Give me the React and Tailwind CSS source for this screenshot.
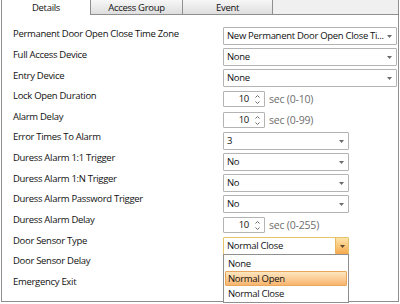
import React from 'react'

const FONT = { fontFamily: '"Open Sans", "Noto Sans", sans-serif' }

const rows = [
  { label: 'Permanent Door Open Close Time Zone', type: 'combo', value: 'New Permanent Door Open Close Ti...', wide: true },
  { label: 'Full Access Device', type: 'combo', value: 'None', wide: true },
  { label: 'Entry Device', type: 'combo', value: 'None', wide: true },
  { label: 'Lock Open Duration', type: 'spin', value: '10', hint: 'sec (0-10)' },
  { label: 'Alarm Delay', type: 'spin', value: '10', hint: 'sec (0-99)' },
  { label: 'Error Times To Alarm', type: 'combo', value: '3' },
  { label: 'Duress Alarm 1:1 Trigger', type: 'combo', value: 'No' },
  { label: 'Duress Alarm 1:N Trigger', type: 'combo', value: 'No' },
  { label: 'Duress Alarm Password Trigger', type: 'combo', value: 'No' },
  { label: 'Duress Alarm Delay', type: 'spin', value: '10', hint: 'sec (0-255)' },
  { label: 'Door Sensor Type', type: 'open', value: 'Normal Close' },
  { label: 'Door Sensor Delay', type: 'none' },
  { label: 'Emergency Exit', type: 'none' },
]

function Caret({ color = '#6b6b6b' }) {
  return (
    <svg width="5" height="3" viewBox="0 0 5 3" className="shrink-0">
      <path d="M0 0h5L2.5 3z" fill={color} />
    </svg>
  )
}

function Combo({ value, wide }) {
  return (
    <div className={`flex items-center justify-between h-[18px] border border-[#b4b4b4] bg-white pl-[3px] pr-[4px] rounded-[1px] ${wide ? 'w-[174px]' : 'w-[126px]'}`}>
      <span className="whitespace-nowrap leading-[14px]">{value}</span>
      <Caret />
    </div>
  )
}

function Spin({ value, hint }) {
  return (
    <div className="flex items-center h-[18px]">
      <div className="flex items-center h-[16px] w-[42px] border border-[#b4b4b4] bg-white rounded-[1px]">
        <span className="flex-1 text-right leading-[14px] pr-[5px]">{value}</span>
        <div className="flex flex-col items-center gap-[3px] w-[7px] mr-[3px]">
          <svg width="5" height="3" viewBox="0 0 5 3"><path d="M0.5 2.5L2.5 0.5L4.5 2.5" stroke="#6b6b6b" fill="none" strokeWidth="1" /></svg>
          <svg width="5" height="3" viewBox="0 0 5 3"><path d="M0.5 0.5L2.5 2.5L4.5 0.5" stroke="#6b6b6b" fill="none" strokeWidth="1" /></svg>
        </div>
      </div>
      <span className="ml-[4px] text-[10.5px] tracking-[-0.2px] text-[#6e6e6e] leading-[14px]">{hint}</span>
    </div>
  )
}

function OpenCombo({ value }) {
  const options = ['None', 'Normal Open', 'Normal Close']
  return (
    <div className="relative w-[126px]">
      <div className="flex items-center justify-between h-[18px] border border-[#e3c36b] bg-white pl-[3px] rounded-[1px]">
        <span className="leading-[14px]">{value}</span>
        <div className="flex items-center justify-center w-[13px] h-full bg-gradient-to-b from-[#fde3a8] to-[#f6a94a] border-l border-[#e8b563]">
          <Caret color="#5a4a30" />
        </div>
      </div>
      <div className="absolute left-0 top-[17px] w-[126px] border border-[#8f8f8f] bg-white p-[1px] z-10">
        {options.map((o) => (
          <div
            key={o}
            className={`h-[15px] flex items-center pl-[2px] leading-[13px] ${o === 'Normal Open' ? 'bg-gradient-to-b from-[#fde6bf] to-[#f7b56d] border border-[#eaa75c] rounded-[1px]' : 'border border-transparent'}`}
          >
            {o}
          </div>
        ))}
      </div>
    </div>
  )
}

export default function App() {
  return (
    <div className="w-[400px] h-[304px] bg-white pl-[1px] pr-[1px] pb-[2px] text-[9.5px] tracking-[-0.3px] text-[#111]" style={FONT}>
      <div className="flex flex-col h-full">
        {/* tab strip */}
        <div className="flex h-[15px] shrink-0">
          <div className="w-[90px] bg-white border-l border-r border-[#8f8f8f] flex items-center justify-center leading-[13px]">Details</div>
          {['Access Group', 'Event'].map((t, i) => (
            <div
              key={t}
              className={`${i === 0 ? 'w-[92px]' : 'w-[90px]'} bg-gradient-to-b from-[#f7f7f7] to-[#dedede] border-r border-b border-[#8f8f8f] flex items-center justify-center leading-[13px]`}
            >
              {t}
            </div>
          ))}
          <div className="flex-1 bg-[#f0f0f0] border-r border-b border-[#8f8f8f]" />
        </div>

        {/* body */}
        <div className="flex flex-1 border-l border-r border-b border-[#8f8f8f]">
          <div className="flex flex-col w-[220px] pl-[11px] pt-[9px]">
            {rows.map((r) => (
              <div key={r.label} className="h-[20.67px] flex items-center whitespace-nowrap">
                {r.label}
              </div>
            ))}
          </div>
          <div className="flex flex-col gap-[3px] pt-[12px] pl-[1px]">
            {rows.map((r) => {
              if (r.type === 'combo') return <Combo key={r.label} value={r.value} wide={r.wide} />
              if (r.type === 'spin') return <Spin key={r.label} value={r.value} hint={r.hint} />
              if (r.type === 'open') return <OpenCombo key={r.label} value={r.value} />
              return null
            })}
          </div>
        </div>
      </div>
    </div>
  )
}
